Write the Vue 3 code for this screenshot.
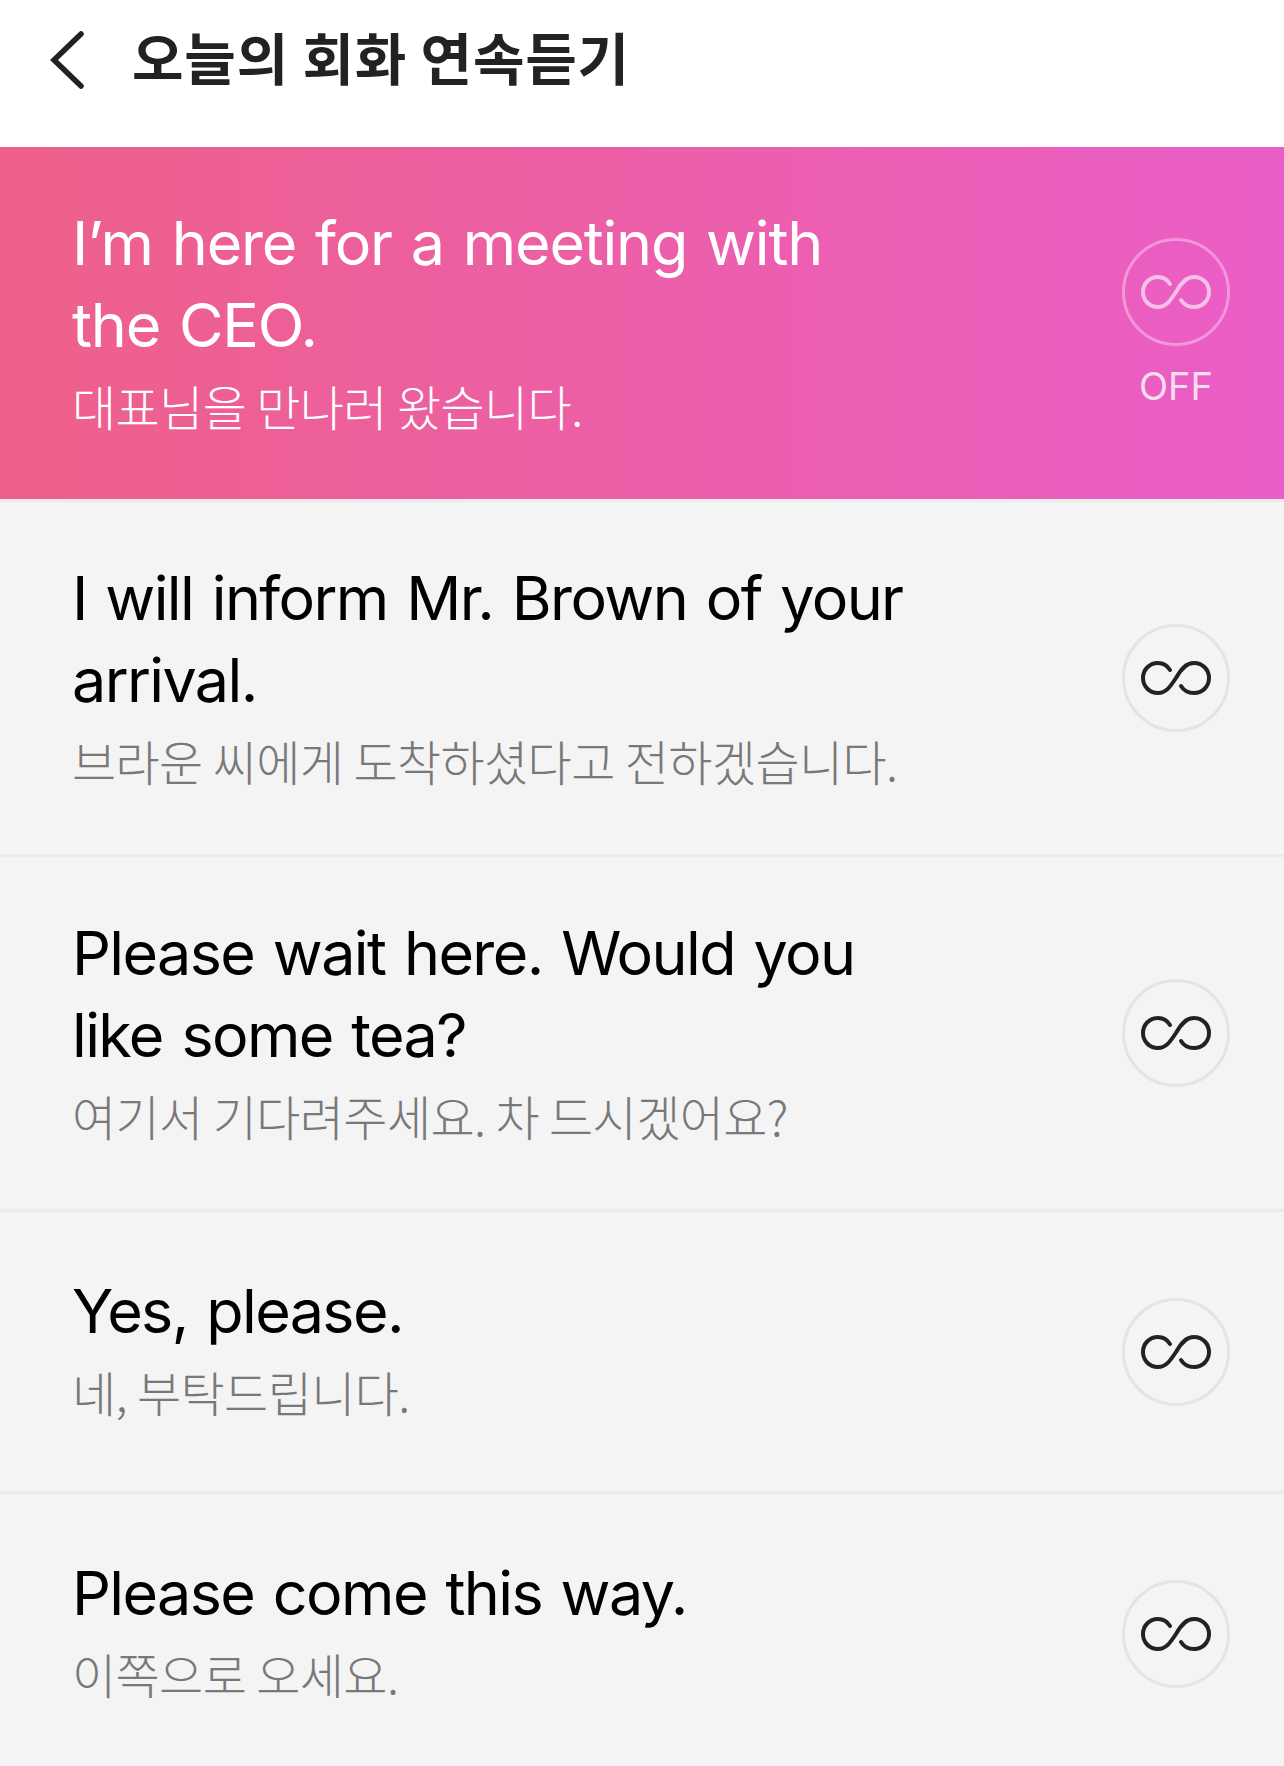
<template>
  <div class="page">
    <header class="top">
      <svg class="back" width="36" height="60" viewBox="0 0 36 60" fill="none">
        <path d="M31 4 L4 30 L31 56" stroke="#222" stroke-width="5.5" stroke-linecap="round" stroke-linejoin="miter" />
      </svg>
      <h1 class="title">오늘의 회화 연속듣기</h1>
    </header>
    <ul class="list">
      <li
        v-for="(item, idx) in items"
        :key="idx"
        class="row"
        :class="{ active: idx === 0 }"
      >
        <div class="texts">
          <p class="en">{{ item.en }}</p>
          <p class="ko">{{ item.ko }}</p>
        </div>
        <div class="side">
          <div class="loop">
            <svg width="74" height="38" viewBox="0 0 74 38" fill="none">
              <path
                d="M31 11 C28 6 24 4 19 4 C10 4 4 11 4 19 C4 27 10 34 19 34 C27 34 31 28 37 19 C42 10 47 4 55 4 C64 4 70 11 70 19 C70 27 64 34 55 34 C50 34 45 32 42 27"
                stroke="currentColor"
                stroke-width="4"
                stroke-linecap="round"
              />
            </svg>
          </div>
          <span v-if="idx === 0" class="off">OFF</span>
        </div>
      </li>
    </ul>
  </div>
</template>

<script setup>
const items = [
  { en: 'I’m here for a meeting with the CEO.', ko: '대표님을 만나러 왔습니다.' },
  { en: 'I will inform Mr. Brown of your arrival.', ko: '브라운 씨에게 도착하셨다고 전하겠습니다.' },
  { en: 'Please wait here. Would you like some tea?', ko: '여기서 기다려주세요. 차 드시겠어요?' },
  { en: 'Yes, please.', ko: '네, 부탁드립니다.' },
  { en: 'Please come this way.', ko: '이쪽으로 오세요.' }
]
</script>

<style scoped>
.page {
  height: 100vh;
  overflow: hidden;
  background: #f4f4f4;
  font-family: Inter, "Noto Sans CJK KR", sans-serif;
}
.top {
  height: 147px;
  background: #fff;
  display: flex;
  align-items: center;
  padding: 0 0 27px 50px;
  gap: 46px;
  box-sizing: border-box;
}
.back {
  flex: none;
}
.title {
  margin: 0 0 10px;
  font-family: "Noto Sans CJK KR", sans-serif;
  font-size: 56px;
  font-weight: 700;
  color: #222;
  letter-spacing: 0.8px;
}
.list {
  list-style: none;
  margin: 0;
  padding: 0;
}
.row {
  box-sizing: border-box;
  min-height: 282px;
  display: flex;
  align-items: center;
  justify-content: space-between;
  padding: 55px 54px 55px 72px;
  border-bottom: 3px solid #ebebeb;
}
.row.active {
  background: linear-gradient(90deg, #ee6089, #ea5ec8);
  background-clip: padding-box;
  color: #fff;
}
.texts {
  width: 836px;
}
.row:nth-child(n + 4) .texts {
  margin-top: -4px;
}
.en {
  margin: 0;
  font-size: 61px;
  line-height: 82px;
  letter-spacing: -1.6px;
  word-spacing: 3px;
  color: #000;
}
.ko {
  margin: 0;
  font-family: "Noto Sans CJK KR", sans-serif;
  font-size: 48px;
  font-weight: 300;
  line-height: 78px;
  letter-spacing: -0.6px;
  color: #787878;
}
.active .en,
.active .ko {
  color: #fff;
}
.active .en {
  letter-spacing: -1.2px;
}
.side {
  display: flex;
  flex-direction: column;
  align-items: center;
  gap: 18px;
}
.loop {
  width: 108px;
  height: 108px;
  box-sizing: border-box;
  border: 3px solid #e4e4e4;
  border-radius: 50%;
  display: flex;
  align-items: center;
  justify-content: center;
  color: #222;
}
.active .loop {
  border-color: rgba(255, 255, 255, 0.35);
  color: rgba(255, 255, 255, 0.6);
}
.off {
  font-size: 38px;
  line-height: 44px;
  color: rgba(255, 255, 255, 0.8);
}
</style>
